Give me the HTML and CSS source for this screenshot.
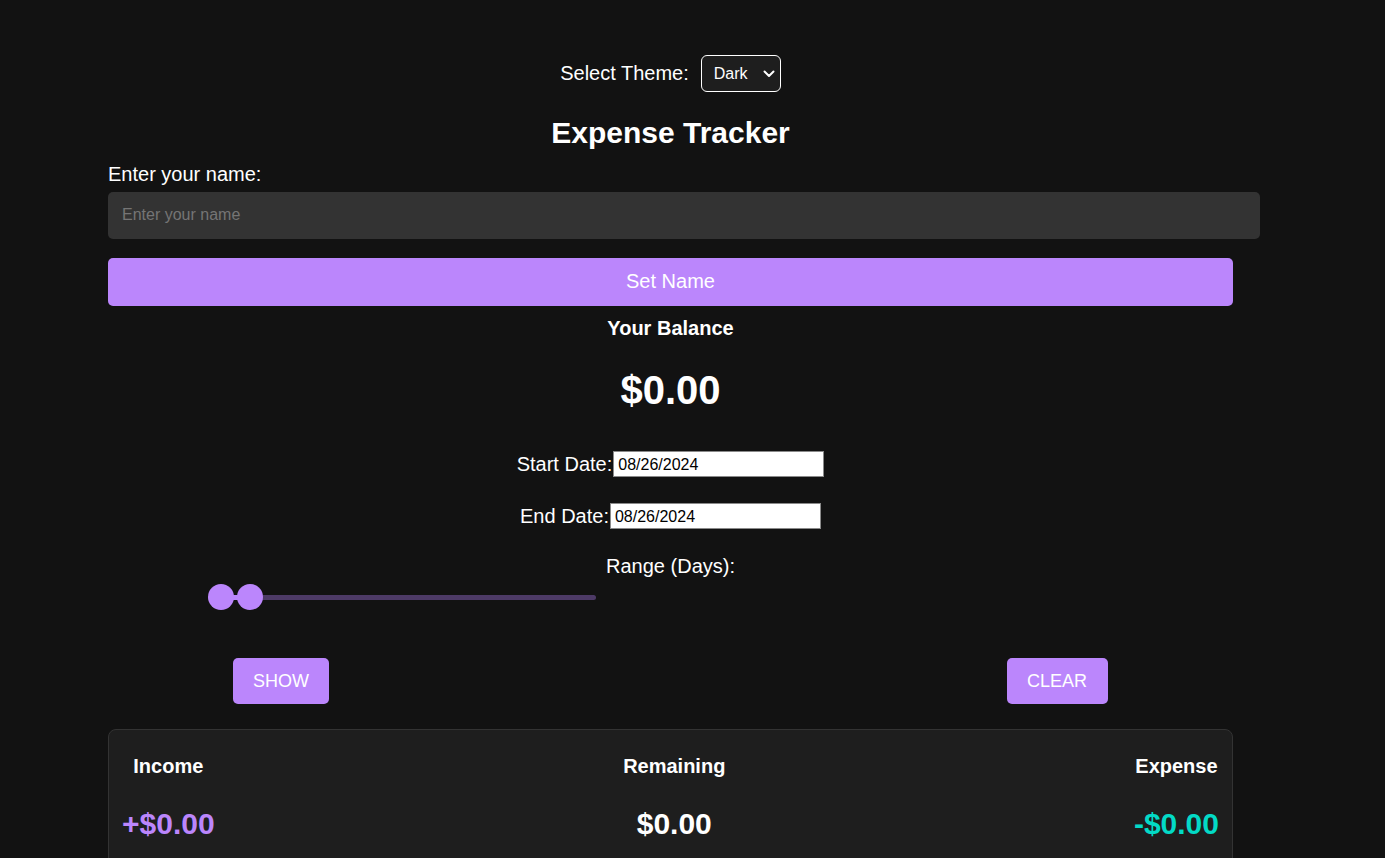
FILE: index.html
```html
<!DOCTYPE html>
<html lang="en">
<head>
<meta charset="utf-8">
<title>Expense Tracker</title>
<link rel="stylesheet" href="styles.css">
</head>
<body>
<div class="app">
  <div class="theme-row">
    <label class="theme-label" for="theme">Select Theme:</label>
    <div class="select-wrap">
      <select id="theme" class="theme-select">
        <option>Dark</option>
        <option>Light</option>
      </select>
      <svg class="chevron" width="12" height="8" viewBox="0 0 12 8" aria-hidden="true">
        <path d="M1.5 1.5 L6 6 L10.5 1.5" fill="none" stroke="#fff" stroke-width="2" stroke-linecap="round" stroke-linejoin="round"/>
      </svg>
    </div>
  </div>
  <h1 class="title">Expense Tracker</h1>
  <label class="name-label" for="name">Enter your name:</label>
  <input id="name" class="name-input" type="text" placeholder="Enter your name">
  <button class="primary-btn">Set Name</button>
  <h3 class="balance-label">Your Balance</h3>
  <div class="balance">$0.00</div>
  <div class="date-row">
    <label class="date-label">Start Date:</label>
    <input class="date-input" type="text" value="08/26/2024">
  </div>
  <div class="date-row date-row-end">
    <label class="date-label">End Date:</label>
    <input class="date-input" type="text" value="08/26/2024">
  </div>
  <div class="range-label">Range (Days):</div>
  <div class="slider">
    <div class="track"></div>
    <div class="fill"></div>
    <div class="thumb thumb-a"></div>
    <div class="thumb thumb-b"></div>
  </div>
  <div class="actions">
    <button class="small-btn">SHOW</button>
    <button class="small-btn">CLEAR</button>
  </div>
  <div class="card">
    <div class="col">
      <div class="col-label">Income</div>
      <div class="col-amount income">+$0.00</div>
    </div>
    <div class="col">
      <div class="col-label">Remaining</div>
      <div class="col-amount">$0.00</div>
    </div>
    <div class="col">
      <div class="col-label">Expense</div>
      <div class="col-amount expense">-$0.00</div>
    </div>
  </div>
</div>
</body>
</html>
```

FILE: styles.css
```css
* { box-sizing: border-box; }
html, body {
  margin: 0;
  padding: 0;
  background: #121212;
  color: #ffffff;
  font-family: "Liberation Sans", Arial, sans-serif;
  height: 100%;
  overflow: hidden;
}
.app {
  width: 1125px;
  margin-left: 108px;
  padding-top: 55px;
}
.theme-row {
  display: flex;
  justify-content: center;
  align-items: center;
  gap: 12px;
  height: 37px;
}
.theme-label {
  font-size: 20px;
}
.select-wrap {
  position: relative;
  width: 80px;
  height: 37px;
}
.theme-select {
  -webkit-appearance: none;
  appearance: none;
  width: 80px;
  height: 37px;
  background: #1e1e1e;
  color: #fff;
  border: 1px solid #fff;
  border-radius: 6px;
  font-family: "Liberation Sans", Arial, sans-serif;
  font-size: 16px;
  padding: 0 0 0 12px;
  outline: none;
}
.chevron {
  position: absolute;
  left: 62px;
  top: 15px;
  pointer-events: none;
}
.title {
  margin: 24px 0 0;
  font-size: 30px;
  line-height: 33px;
  text-align: center;
  font-weight: bold;
}
.name-label {
  display: block;
  margin-top: 14px;
  font-size: 20px;
  line-height: 22px;
}
.name-input {
  display: block;
  margin-top: 7px;
  width: 1152px;
  height: 47px;
  padding: 0 14px 2px;
  background: #333333;
  border: none;
  border-radius: 5px;
  color: #fff;
  font-family: "Liberation Sans", Arial, sans-serif;
  font-size: 16px;
  outline: none;
}
.name-input::placeholder {
  color: #757575;
}
.primary-btn {
  display: block;
  margin-top: 19px;
  width: 1125px;
  height: 48px;
  padding: 0 0 2px;
  background: #bb86fc;
  color: #fff;
  border: none;
  border-radius: 5px;
  font-family: "Liberation Sans", Arial, sans-serif;
  font-size: 20px;
}
.balance-label {
  margin: 10px 0 0;
  text-align: center;
  font-size: 20px;
  line-height: 24px;
  font-weight: bold;
}
.balance {
  margin-top: 27px;
  text-align: center;
  font-size: 40px;
  line-height: 46px;
  font-weight: bold;
}
.date-row {
  display: flex;
  justify-content: center;
  align-items: center;
  height: 26px;
  margin-top: 38px;
}
.date-row-end {
  margin-top: 26px;
}
.date-label {
  font-size: 20px;
}
.date-input {
  width: 211px;
  height: 26px;
  margin-left: 1px;
  padding: 2px 4px 1px;
  border: 1px solid #8a8a8a;
  background: #fff;
  color: #000;
  font-family: "Liberation Sans", Arial, sans-serif;
  font-size: 16px;
}
.range-label {
  margin-top: 25px;
  text-align: center;
  font-size: 20px;
  line-height: 24px;
}
.slider {
  position: relative;
  margin-top: 6px;
  margin-left: 100px;
  width: 388px;
  height: 26px;
}
.track {
  position: absolute;
  left: 0;
  top: 11px;
  width: 388px;
  height: 5px;
  border-radius: 3px;
  background: #4d3a66;
}
.fill {
  position: absolute;
  left: 13px;
  top: 11px;
  width: 29px;
  height: 5px;
  background: #bb86fc;
}
.thumb {
  position: absolute;
  top: 0;
  width: 26px;
  height: 26px;
  border-radius: 50%;
  background: #bb86fc;
}
.thumb-a { left: 0; }
.thumb-b { left: 29px; }
.actions {
  display: flex;
  justify-content: space-between;
  padding: 0 125px;
  margin-top: 48px;
}
.small-btn {
  height: 46px;
  padding: 0 20px;
  background: #bb86fc;
  color: #fff;
  border: none;
  border-radius: 5px;
  font-family: "Liberation Sans", Arial, sans-serif;
  font-size: 18px;
}
.actions .small-btn:last-child {
  padding: 0 21px 0 20px;
}
.card {
  margin-top: 25px;
  display: flex;
  justify-content: space-between;
  padding: 24px 13px 30px;
  background: #1e1e1e;
  border: 1px solid #333;
  border-radius: 8px;
  height: 160px;
}
.col {
  text-align: center;
}
.col-label {
  font-size: 20px;
  line-height: 24px;
  font-weight: bold;
}
.col-amount {
  margin-top: 29px;
  font-size: 30px;
  line-height: 34px;
  font-weight: bold;
}
.income { color: #bb86fc; }
.expense { color: #03dac6; }
```
